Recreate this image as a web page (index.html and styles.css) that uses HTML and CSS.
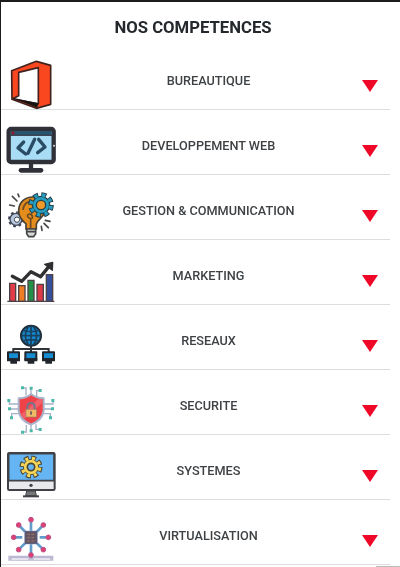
FILE: index.html
```html
<!DOCTYPE html>
<html lang="fr">
<head>
<meta charset="utf-8">
<title>Nos compétences</title>
<link rel="stylesheet" href="styles.css">
</head>
<body>
<main class="page">
<h1 class="title">NOS COMPETENCES</h1>
<ul class="skills">
<li class="skill">
<svg class="icon" viewBox="3 0 207 177"><path fill="#fb4720" stroke="#42221e" stroke-width="5" stroke-linejoin="round" d="M35 62 109 34 152 46V163L109 175 36 148Z"/><path fill="#fff" stroke="#42221e" stroke-width="5" stroke-linejoin="round" d="M56 67 115 53V162L38 146 56 137Z"/><path fill="#171313" d="M38 145 115 159 112 173Z"/></svg>
<span class="label">BUREAUTIQUE</span><svg class="arrow" viewBox="0 0 16 12"><path d="M0 0H16L8 12Z"/></svg>
</li>
<li class="skill">
<svg class="icon" viewBox="3 0 207 177"><rect x="26" y="42" width="135" height="99" rx="7" fill="#a9dcf5" stroke="#303039" stroke-width="13"/><path fill="#28546f" d="M32 48H155V61H32Z"/><path stroke="#303039" stroke-width="3" d="M31 61H156"/><circle cx="39" cy="54" r="5" fill="#8f1c2c"/><path fill="none" stroke="#294b64" stroke-width="10" stroke-linecap="round" stroke-linejoin="round" d="M71 81 54 99 77 117M84 115 104 73M116 73 135 96 113 113"/><path stroke="#303039" stroke-width="13" d="M93 144V164"/><path stroke="#303039" stroke-width="14" stroke-linecap="round" d="M63 166H123"/><circle cx="162" cy="92" r="3" fill="#ddd"/></svg>
<span class="label">DEVELOPPEMENT WEB</span><svg class="arrow" viewBox="0 0 16 12"><path d="M0 0H16L8 12Z"/></svg>
</li>
<li class="skill">
<svg class="icon" viewBox="3 0 207 177"><circle cx="48" cy="118" r="20" fill="none" stroke="#434a59" stroke-width="8" stroke-dasharray="8 7.7"/><circle cx="48" cy="118" r="18" fill="#b6c7df" stroke="#434a59" stroke-width="4"/><circle cx="51" cy="119" r="8" fill="#fff" stroke="#434a59" stroke-width="3"/><path fill="#e48d1c" stroke="#4a4034" stroke-width="5" d="M78 147V132C66 120 56 110 56 94 56 67 74 50 102 51L137 95C128 113 112 120 109 132V147Z"/><path fill="none" stroke="#6b4b26" stroke-width="5" d="M69 90Q71 70 87 65M92 146V116Q80 112 83 105 91 98 97 108V116"/><path fill="#d5d8d9" stroke="#454545" stroke-width="5" d="M80 147H107V161L101 170H86L80 161ZM81 155H106"/><circle cx="123" cy="75" r="31" fill="none" stroke="#263e49" stroke-width="15" stroke-dasharray="15 9.35"/><circle cx="123" cy="75" r="26" fill="#269dbe" stroke="#263e49" stroke-width="4"/><circle cx="123" cy="75" r="30" fill="none" stroke="#269dbe" stroke-width="11" stroke-dasharray="9.5 14.06" stroke-dashoffset="-2.5"/><circle cx="123" cy="75" r="14" fill="#ef9a28" stroke="#263e49" stroke-width="4"/><path fill="none" stroke="#464646" stroke-width="5" stroke-linecap="round" d="M54 42 57 50M37 49 51 63M29 75 43 78M136 121 150 124M132 130 145 143M124 139 126 151"/></svg>
<span class="label">GESTION &amp; COMMUNICATION</span><svg class="arrow" viewBox="0 0 16 12"><path d="M0 0H16L8 12Z"/></svg>
</li>
<li class="skill">
<svg class="icon" viewBox="3 0 207 177"><g stroke="#4b4147" stroke-width="4"><path fill="#e33c49" d="M29 115H47V169H29Z"/><path fill="#ee7d25" d="M56 122H75V169H56Z"/><path fill="#248f46" d="M84 106H102V169H84Z"/><path fill="#dc3949" d="M111 118H130V169H111Z"/><path fill="#354f9b" d="M139 89H158V169H139Z"/><path d="M22 169H163"/></g><path fill="none" stroke="#303033" stroke-width="10" stroke-linejoin="round" stroke-linecap="round" d="M37 94 65 109 93 80 122 95 147 64"/><path fill="#303033" stroke="#303033" stroke-width="4" stroke-linejoin="round" d="M134 58 158 52 157 76Z"/></svg>
<span class="label">MARKETING</span><svg class="arrow" viewBox="0 0 16 12"><path d="M0 0H16L8 12Z"/></svg>
</li>
<li class="skill">
<svg class="icon" viewBox="3 0 207 177"><circle cx="93" cy="77" r="30" fill="#1689cd" stroke="#202d39" stroke-width="6"/><path fill="none" stroke="#18405f" stroke-width="5" d="M93 47V107M63 77H123M69 61Q93 69 117 61M69 93Q93 85 117 93M86 48Q66 77 86 106M100 48Q120 77 100 106"/><path fill="none" stroke="#303338" stroke-width="6" d="M93 108V126M40 126V117H146V126"/><g fill="#168cd1" stroke="#20262c" stroke-width="6" stroke-linejoin="round"><path d="M24 127H57V148H24ZM76 127H109V148H76ZM129 127H162V148H129Z"/></g><path stroke="#20262c" stroke-width="9" d="M21 149H60M73 149H112M126 149H165"/><path stroke="#20262c" stroke-width="9" d="M31 157H51M83 157H103M136 157H156"/></svg>
<span class="label">RESEAUX</span><svg class="arrow" viewBox="0 0 16 12"><path d="M0 0H16L8 12Z"/></svg>
</li>
<li class="skill">
<svg class="icon" viewBox="3 0 207 177"><path fill="none" stroke="#a5b2c8" stroke-width="4" d="M93 40V60M70 39H78V61M120 47H110V66M28 77V87H55M28 102H55M35 128V116H58M159 77V87H130M158 102H130M151 128V116H128M68 171H79V150M93 166V145M119 163H108V148"/><g fill="#4bb9a9"><path d="M63 34h9v9h-9zM89 35h9v9h-9zM116 42h9v9h-9zM22 72h9v9h-9zM24 97h9v9h-9zM30 124h9v9h-9zM154 72h9v9h-9zM153 97h9v9h-9zM147 124h9v9h-9zM63 167h9v9h-9zM89 163h9v9h-9zM116 159h9v9h-9z"/></g><path fill="#ef4248" stroke="#a9b3cb" stroke-width="6" stroke-linejoin="round" d="M93 57Q108 69 131 70V108Q126 136 93 149 60 136 56 108V70Q80 69 93 57Z"/><path fill="#f5616b" d="M114 73 126 72V84L72 132 63 119Z"/><path fill="none" stroke="#75738b" stroke-width="6" d="M82 105V94Q83 84 93 84T104 94V105"/><rect x="78" y="103" width="31" height="23" fill="#efb966" stroke="#a58066" stroke-width="2"/><path stroke="#655563" stroke-width="5" d="M93 109V119"/></svg>
<span class="label">SECURITE</span><svg class="arrow" viewBox="0 0 16 12"><path d="M0 0H16L8 12Z"/></svg>
</li>
<li class="skill">
<svg class="icon" viewBox="3 0 207 177"><rect x="24" y="39" width="140" height="111" rx="4" fill="#e8e9ea" stroke="#414247" stroke-width="6"/><path fill="#65b5f5" stroke="#414247" stroke-width="5" d="M26 41H162V122H26Z"/><circle cx="93" cy="81" r="27" fill="none" stroke="#494638" stroke-width="15" stroke-dasharray="14 7.2"/><circle cx="93" cy="81" r="23" fill="#f5d657" stroke="#494638" stroke-width="3"/><circle cx="93" cy="81" r="26" fill="none" stroke="#f5d657" stroke-width="10" stroke-dasharray="9 11.42" stroke-dashoffset="-2.2"/><circle cx="93" cy="81" r="11" fill="#65b5f5" stroke="#494638" stroke-width="5"/><circle cx="93" cy="136" r="5" fill="#414247"/><path fill="#777" stroke="#414247" stroke-width="3" d="M80 153H106L109 167H77Z"/><path stroke="#414247" stroke-width="6" d="M69 169H117"/></svg>
<span class="label">SYSTEMES</span><svg class="arrow" viewBox="0 0 16 12"><path d="M0 0H16L8 12Z"/></svg>
</li>
<li class="skill">
<svg class="icon" viewBox="3 0 207 177"><path stroke="#bcb8d1" stroke-width="11" d="M25 158H160"/><path stroke="#bcb8d1" stroke-width="5" d="M25 165H160"/><path stroke="#eeeef6" stroke-width="5" d="M35 162H85M101 162H150"/><path stroke="#609ccb" stroke-width="8" d="M93 50V77M56 60 75 80M130 60 111 80M41 97H67M145 97H119M56 134 75 115M130 134 111 115M93 148V118"/><g fill="#df3f75" stroke="#b94e83" stroke-width="3"><circle cx="93" cy="44" r="7"/><circle cx="56" cy="60" r="7"/><circle cx="130" cy="60" r="7"/><circle cx="41" cy="97" r="7"/><circle cx="145" cy="97" r="7"/><circle cx="56" cy="134" r="7"/><circle cx="130" cy="134" r="7"/><circle cx="93" cy="150" r="7"/></g><path fill="#625666" stroke="#555982" stroke-width="3" d="M75 79H111V116H75Z"/><path stroke="#a57758" stroke-width="3" stroke-dasharray="8 4" d="M82 88H106M82 98H106M82 108H106"/></svg>
<span class="label">VIRTUALISATION</span><svg class="arrow" viewBox="0 0 16 12"><path d="M0 0H16L8 12Z"/></svg>
</li>
</ul>
<div class="scroll-edge"></div>
</main>
</body>
</html>
```
FILE: styles.css
```css
* { box-sizing: border-box; }
body { margin: 0; background: #fff; font-family: Roboto, sans-serif; overflow: hidden; }
.page {
  position: relative;
  height: 567px;
  border-top: 2px solid #1d1b1d;
  border-left: 1px solid #1d1b1d;
  overflow: hidden;
}
.title {
  margin: 0;
  width: 384px;
  height: 43px;
  padding-top: 16px;
  font-size: 16.7px;
  line-height: 20px;
  font-weight: 700;
  text-align: center;
  color: #24282c;
  filter: blur(0.5px);
}
.skills { list-style: none; margin: 0; padding: 0; width: 389px; }
.skill {
  display: grid;
  grid-template-columns: 69px 277px 43px;
  height: 65px;
  border-bottom: 1px solid #dcdddd;
}
.icon {
  width: 69px;
  height: 59px;
  margin-top: 5px;
  overflow: visible;
  filter: blur(0.55px);
}
.label {
  padding-top: 26px;
  font-size: 12.7px;
  line-height: 20px;
  font-weight: 500;
  text-align: center;
  color: #3f4245;
  filter: blur(0.5px);
}
.arrow { width: 16px; height: 12px; margin: 35px 0 0 15px; fill: #ee0727; overflow: visible; filter: blur(0.4px); }
.scroll-edge { position: absolute; right: 0; bottom: 0; width: 24px; height: 1px; background: #b9b9b9; }
```
